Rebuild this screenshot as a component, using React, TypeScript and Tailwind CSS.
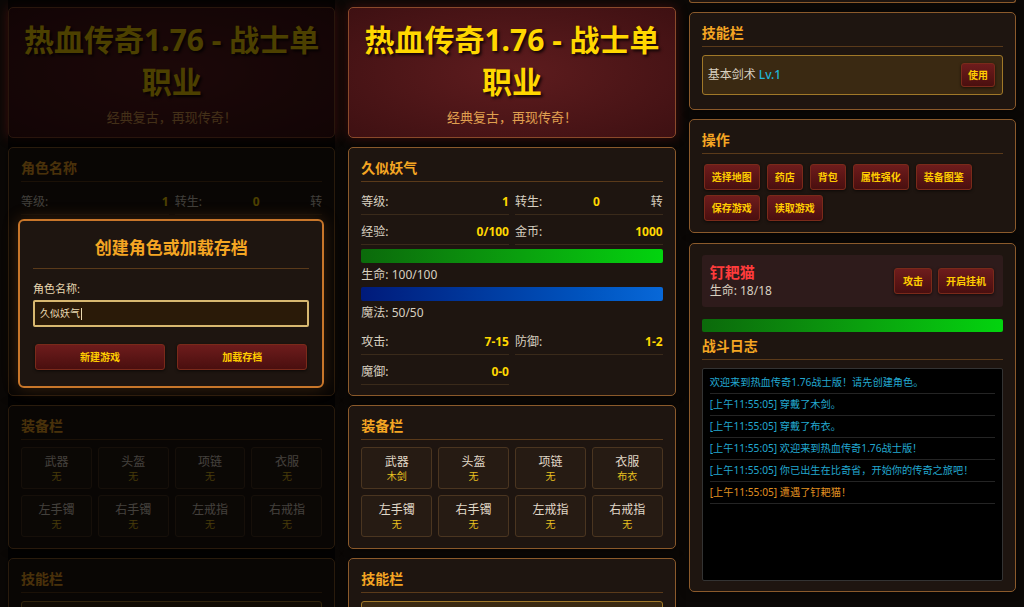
import React from 'react';

interface Props {
  children?: React.ReactNode;
  className?: string;
}

const Card: React.FC<Props> = ({ children, className = '' }) => (
  <div
    className={`rounded-[5px] border border-[#8b5a2b] bg-[#1e1510] px-3 pt-[10px] shadow-[0_0_8px_rgba(0,0,0,0.6)] ${className}`}
  >
    {children}
  </div>
);

const SectionTitle: React.FC<Props> = ({ children, className = '' }) => (
  <h3
    className={`h-[24px] border-b border-[#5a3a1a] text-[14px] font-bold leading-5 text-[#f5a623] ${className}`}
  >
    {children}
  </h3>
);

const GameButton: React.FC<Props> = ({ children, className = '' }) => (
  <button
    className={`rounded-[3px] border border-[#7a2a1a] bg-linear-to-b from-[#6e1c1c] to-[#4a0f0f] text-[10px] font-bold leading-[14px] text-[#ffcc00] shadow-[0_1px_3px_rgba(0,0,0,0.6)] ${className}`}
  >
    {children}
  </button>
);

const HeaderCard = () => (
  <div className="rounded-[5px] border border-[#8b4a2b] bg-[radial-gradient(ellipse_at_center,#5e1c1e_0%,#3e1012_100%)] px-3 pt-[11px] pb-[10px] text-center shadow-[0_0_12px_rgba(120,20,20,0.45)]">
    <h1 className="text-[30px] font-bold leading-[42px] text-[#ffd700] [text-shadow:2px_2px_3px_rgba(0,0,0,0.8)]">
      热血传奇1.76 - 战士单职业
    </h1>
    <p className="mt-[4px] h-5 text-[13px] leading-5 text-[#e0a050]">经典复古，再现传奇！</p>
  </div>
);

interface StatProps {
  label: string;
  value: string;
  unit?: string;
}

const StatCell: React.FC<StatProps> = ({ label, value, unit }) => (
  <div className="flex h-[25px] items-center justify-between border-b border-[#3a2a1a] text-[12px] leading-4">
    <span className="text-[#d8d0c0]">{label}</span>
    <span className="font-bold text-[#ffd700]">{value}</span>
    {unit && <span className="text-[#d8d0c0]">{unit}</span>}
  </div>
);

const CharacterCard: React.FC<{ name: string }> = ({ name }) => (
  <Card className="pb-[10px]">
    <SectionTitle>{name}</SectionTitle>
    <div className="mt-[8px] grid grid-cols-2 gap-x-[6px] gap-y-[5px]">
      <StatCell label="等级:" value="1" />
      <StatCell label="转生:" value="0" unit="转" />
      <StatCell label="经验:" value="0/100" />
      <StatCell label="金币:" value="1000" />
    </div>
    <div className="mt-[4px] h-[14px] rounded-[2px] bg-linear-to-r from-[#0b6a0b] to-[#02d40e]" />
    <div className="mt-[3px] flex h-[18px] items-center text-[12px] text-[#d8d0c0]">生命: 100/100</div>
    <div className="mt-[3px] h-[14px] rounded-[2px] bg-linear-to-r from-[#001a7a] to-[#0868d8]" />
    <div className="mt-[3px] flex h-[18px] items-center text-[12px] text-[#d8d0c0]">魔法: 50/50</div>
    <div className="mt-[8px] grid grid-cols-2 gap-x-[6px] gap-y-[5px]">
      <StatCell label="攻击:" value="7-15" />
      <StatCell label="防御:" value="1-2" />
      <StatCell label="魔御:" value="0-0" />
    </div>
  </Card>
);

const slotNames = ['武器', '头盔', '项链', '衣服', '左手镯', '右手镯', '左戒指', '右戒指'];

const EquipmentCard: React.FC<{ items: string[] }> = ({ items }) => (
  <Card className="pb-[11px]">
    <SectionTitle>装备栏</SectionTitle>
    <div className="mt-[7px] grid grid-cols-4 gap-[6px]">
      {slotNames.map((slot, i) => (
        <div
          key={slot}
          className="flex h-[42px] flex-col items-center justify-center rounded-[3px] border border-[#4a3520] bg-[#261b13]"
        >
          <div className="h-[17px] text-[12px] leading-[17px] text-[#e0d8c8]">{slot}</div>
          <div className="h-[13px] text-[10px] leading-[13px] text-[#e8c020]">{items[i]}</div>
        </div>
      ))}
    </div>
  </Card>
);

const SkillCard = () => (
  <Card className="pb-[14px]">
    <SectionTitle>技能栏</SectionTitle>
    <div className="mt-[8px] flex h-[40px] items-center justify-between rounded-[3px] border border-[#a07828] bg-[#3a2912] pl-[5px] pr-[7px]">
      <span className="text-[12px] text-[#d8d0c0]">
        基本剑术 <span className="font-medium text-[#1fb5d8]">Lv.1</span>
      </span>
      <GameButton className="h-[24px] w-[34px]">使用</GameButton>
    </div>
  </Card>
);

const ops = ['选择地图', '药店', '背包', '属性强化', '装备图鉴', '保存游戏', '读取游戏'];

const OperationsCard = () => (
  <Card className="pb-[11px]">
    <SectionTitle>操作</SectionTitle>
    <div className="mt-[10px] flex flex-wrap gap-x-[7px] gap-y-[5px] pl-[2px]">
      {ops.map((op) => (
        <GameButton key={op} className="h-[26px] px-[7px]">
          {op}
        </GameButton>
      ))}
    </div>
  </Card>
);

const logs = [
  { text: '欢迎来到热血传奇1.76战士版！请先创建角色。', warn: false },
  { text: '[上午11:55:05] 穿戴了木剑。', warn: false },
  { text: '[上午11:55:05] 穿戴了布衣。', warn: false },
  { text: '[上午11:55:05] 欢迎来到热血传奇1.76战士版！', warn: false },
  { text: '[上午11:55:05] 你已出生在比奇省，开始你的传奇之旅吧！', warn: false },
  { text: '[上午11:55:05] 遭遇了钉耙猫！', warn: true },
];

const BattleCard = () => (
  <Card className="mt-px pt-[11px] pb-[10px]">
    <div className="flex h-[52px] items-center justify-between rounded-[3px] bg-[#2e1b1b] pl-[8px] pr-[9px]">
      <div>
        <div className="h-5 text-[15px] font-bold leading-5 text-[#ff3b3b]">钉耙猫</div>
        <div className="h-[18px] text-[12px] leading-[18px] text-[#d8d0c0]">生命: 18/18</div>
      </div>
      <div className="flex gap-[6px]">
        <GameButton className="h-[26px] px-[8px]">攻击</GameButton>
        <GameButton className="h-[26px] px-[7px]">开启挂机</GameButton>
      </div>
    </div>
    <div className="mt-[12px] h-[13px] rounded-[2px] bg-linear-to-r from-[#0b6a0b] to-[#02d40e]" />
    <SectionTitle className="mt-[4px]">战斗日志</SectionTitle>
    <div className="mt-[8px] h-[213px] rounded-[2px] border border-[#333] bg-black px-[7px] pt-[3px]">
      {logs.map((log, i) => (
        <div
          key={i}
          className={`flex h-[22px] items-center border-b border-[#242424] text-[10.2px] ${log.warn ? 'text-[#e09020]' : 'text-[#22a8d0]'}`}
        >
          {log.text}
        </div>
      ))}
    </div>
  </Card>
);

const CreateModal = () => (
  <div className="absolute left-[10px] right-[11px] top-[219px] z-20 rounded-[6px] border-2 border-[#c8762a] bg-[#1e1510] px-[13px] pt-[15px] pb-[16px] shadow-[0_0_16px_rgba(200,118,42,0.25)]">
    <h2 className="border-b border-[#5a3a1a] pb-[8px] text-center text-[17px] font-bold leading-6 text-[#f5a623]">
      创建角色或加载存档
    </h2>
    <div className="mt-[12px] text-[11px] leading-4 text-[#e8d8b0]">角色名称:</div>
    <div className="mt-[3px] flex h-[27px] items-center rounded-[2px] border-2 border-[#d8b870] bg-[#2a1a08] px-[5px] text-[10px] text-[#e8d8b0]">
      久似妖气
      <span className="ml-px h-[12px] w-px bg-[#e8d8b0]" />
    </div>
    <div className="mt-[17px] grid grid-cols-2 gap-3 px-[2px]">
      <GameButton className="h-[26px]">新建游戏</GameButton>
      <GameButton className="h-[26px]">加载存档</GameButton>
    </div>
  </div>
);

export default function App() {
  return (
    <div className="grid h-[607px] grid-cols-3 gap-[13px] overflow-hidden bg-[#0b0806] px-2 font-['Noto_Sans','Noto_Sans_CJK_SC',sans-serif]">
      <div className="relative flex flex-col gap-[9px] pt-[7px]">
        <HeaderCard />
        <CharacterCard name="角色名称" />
        <EquipmentCard items={['无', '无', '无', '无', '无', '无', '无', '无']} />
        <SkillCard />
        <div className="absolute inset-0 z-10 bg-black/70" />
        <CreateModal />
      </div>

      <div className="flex flex-col gap-[9px] pt-[7px]">
        <HeaderCard />
        <CharacterCard name="久似妖气" />
        <EquipmentCard items={['木剑', '无', '无', '布衣', '无', '无', '无', '无']} />
        <SkillCard />
      </div>

      <div className="flex flex-col gap-[9px]">
        <div className="h-[3px] rounded-b-[5px] border-x border-b border-[#8b5a2b] bg-[#1e1510]" />
        <SkillCard />
        <OperationsCard />
        <BattleCard />
      </div>
    </div>
  );
}
